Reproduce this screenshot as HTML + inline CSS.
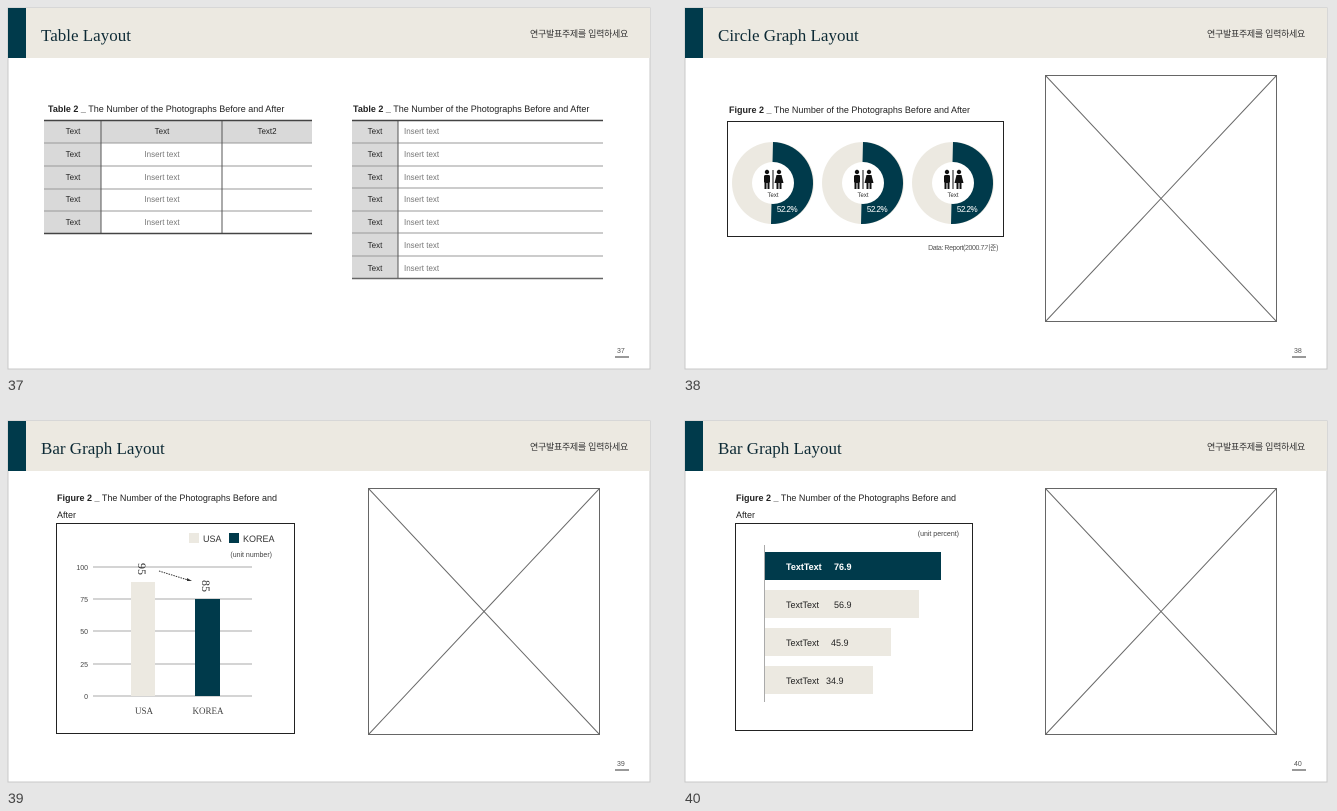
<!DOCTYPE html>
<html><head><meta charset="utf-8"><style>
html,body{margin:0;padding:0;background:#e6e6e6;}
svg{display:block;}
text{font-family:"Liberation Sans","Noto Sans CJK KR",sans-serif;}
.serif{font-family:"Liberation Serif","Noto Serif CJK SC",serif;}
</style></head><body>
<svg width="1337" height="811" viewBox="0 0 1337 811" xmlns="http://www.w3.org/2000/svg">
<defs>
<g id="hdr">
  <rect x="0" y="0" width="642" height="361" fill="#fff" stroke="#c8c8c8"/>
  <rect x="0" y="0" width="642" height="50" fill="#ece9e1"/>
  <rect x="0" y="0" width="18" height="50" fill="#003a4b"/>
  <text x="620" y="29" font-size="9" fill="#333" text-anchor="end" letter-spacing="-0.3" font-family="'Noto Sans CJK KR',sans-serif">연구발표주제를 입력하세요</text>
</g>
<g id="ppl">
  <circle cx="-6" cy="-9" r="2.2" fill="#111"/><rect x="-9" y="-6" width="6" height="8" rx="1.5" fill="#111"/><rect x="-8.5" y="1" width="2" height="7" fill="#111"/><rect x="-5.5" y="1" width="2" height="7" fill="#111"/>
  <rect x="-0.5" y="-11" width="1" height="19" fill="#111"/>
  <circle cx="6" cy="-9" r="2.2" fill="#111"/><path d="M3.5,-6 h5 l2,8 h-9 z" fill="#111"/><rect x="3.5" y="1" width="2" height="7" fill="#111"/><rect x="6.5" y="1" width="2" height="7" fill="#111"/>
</g>
<g id="donut">
  <circle cx="0" cy="0" r="41" fill="#ece9e1"/>
  <path d="M0,-41 A41 41 0 1 1 -2,41 Z" fill="#003a4b"/>
  <circle cx="0" cy="0" r="21" fill="#fff"/>
  <use href="#ppl" y="-2"/>
  <text x="0" y="14" font-size="6" text-anchor="middle" fill="#333">Text</text>
  <text x="14" y="29" font-size="8" text-anchor="middle" fill="#fff" letter-spacing="-0.5">52.2%</text>
</g>
<g id="xbox">
  <rect x="0" y="0" width="231" height="246" fill="none" stroke="#666" stroke-width="1"/>
  <line x1="0" y1="0" x2="231" y2="246" stroke="#666"/>
  <line x1="231" y1="0" x2="0" y2="246" stroke="#666"/>
</g>
</defs>

<!-- Slide 37 -->
<g transform="translate(8,8)">
  <use href="#hdr"/>
  <text x="33" y="33" class="serif" font-size="17" fill="#0d2a35">Table Layout</text>
  <text x="609" y="345" font-size="7" fill="#555">37</text>
  <line x1="607" y1="349" x2="621" y2="349" stroke="#333"/>
</g>
<text x="8" y="390" font-size="14" fill="#444">37</text>
<text x="48" y="112" font-size="9" fill="#222"><tspan font-weight="bold">Table 2 _</tspan> The Number of the Photographs Before and After</text>
<rect x="44" y="120" width="268" height="23" fill="#d9d9d9"/>
<rect x="44" y="143" width="57" height="91" fill="#d9d9d9"/>
<g stroke="#999" stroke-width="1">
  <line x1="44" y1="143" x2="312" y2="143"/><line x1="44" y1="166" x2="312" y2="166"/><line x1="44" y1="189" x2="312" y2="189"/><line x1="44" y1="211" x2="312" y2="211"/>
</g>
<line x1="101" y1="120" x2="101" y2="234" stroke="#555"/><line x1="222" y1="120" x2="222" y2="234" stroke="#555"/>
<line x1="44" y1="120.5" x2="312" y2="120.5" stroke="#444" stroke-width="1.5"/>
<line x1="44" y1="233.5" x2="312" y2="233.5" stroke="#444" stroke-width="1.5"/>
<g font-size="8" text-anchor="middle" fill="#222">
  <text x="73" y="134">Text</text><text x="162" y="134">Text</text><text x="267" y="134">Text2</text>
  <text x="73" y="157">Text</text><text x="73" y="180">Text</text><text x="73" y="202">Text</text><text x="73" y="225">Text</text>
</g>
<g font-size="8" text-anchor="middle" fill="#777">
  <text x="162" y="157">Insert text</text><text x="162" y="180">Insert text</text><text x="162" y="202">Insert text</text><text x="162" y="225">Insert text</text>
</g>
<text x="353" y="112" font-size="9" fill="#222"><tspan font-weight="bold">Table 2 _</tspan> The Number of the Photographs Before and After</text>
<rect x="352" y="120" width="46" height="159" fill="#d9d9d9"/>
<g stroke="#999">
  <line x1="352" y1="143" x2="603" y2="143"/><line x1="352" y1="166" x2="603" y2="166"/><line x1="352" y1="188" x2="603" y2="188"/><line x1="352" y1="211" x2="603" y2="211"/><line x1="352" y1="233" x2="603" y2="233"/><line x1="352" y1="256" x2="603" y2="256"/>
</g>
<line x1="398" y1="120" x2="398" y2="279" stroke="#555"/>
<line x1="352" y1="120.5" x2="603" y2="120.5" stroke="#444" stroke-width="1.5"/>
<line x1="352" y1="278.5" x2="603" y2="278.5" stroke="#666" stroke-width="1.5"/>
<g font-size="8" fill="#222" text-anchor="middle">
  <text x="375" y="134">Text</text><text x="375" y="157">Text</text><text x="375" y="180">Text</text><text x="375" y="202">Text</text><text x="375" y="225">Text</text><text x="375" y="248">Text</text><text x="375" y="271">Text</text>
</g>
<g font-size="8" fill="#777">
  <text x="404" y="134">Insert text</text><text x="404" y="157">Insert text</text><text x="404" y="180">Insert text</text><text x="404" y="202">Insert text</text><text x="404" y="225">Insert text</text><text x="404" y="248">Insert text</text><text x="404" y="271">Insert text</text>
</g>

<!-- Slide 38 -->
<g transform="translate(685,8)">
  <use href="#hdr"/>
  <text x="33" y="33" class="serif" font-size="17" fill="#0d2a35">Circle Graph Layout</text>
  <text x="609" y="345" font-size="7" fill="#555">38</text>
  <line x1="607" y1="349" x2="621" y2="349" stroke="#333"/>
</g>
<text x="685" y="390" font-size="14" fill="#444">38</text>
<text x="729" y="113" font-size="9" fill="#222"><tspan font-weight="bold">Figure 2 _</tspan> The Number of the Photographs Before and After</text>
<rect x="727.5" y="121.5" width="276" height="115" fill="none" stroke="#222"/>
<use href="#donut" x="773" y="183"/>
<use href="#donut" x="863" y="183"/>
<use href="#donut" x="953" y="183"/>
<text x="998" y="250" font-size="7" fill="#555" text-anchor="end" letter-spacing="-0.4">Data: Report(2000.7기준)</text>
<use href="#xbox" x="1045.5" y="75.5"/>

<!-- Slide 39 -->
<g transform="translate(8,421)">
  <use href="#hdr"/>
  <text x="33" y="33" class="serif" font-size="17" fill="#0d2a35">Bar Graph Layout</text>
  <text x="609" y="345" font-size="7" fill="#555">39</text>
  <line x1="607" y1="349" x2="621" y2="349" stroke="#333"/>
</g>
<text x="8" y="803" font-size="14" fill="#444">39</text>
<text x="57" y="501" font-size="9" fill="#222"><tspan font-weight="bold">Figure 2 _</tspan> The Number of the Photographs Before and</text>
<text x="57" y="518" font-size="9" fill="#222">After</text>
<rect x="56.5" y="523.5" width="238" height="210" fill="none" stroke="#222"/>
<rect x="189" y="533" width="10" height="10" fill="#ece9e1"/><text x="203" y="542" font-size="9" fill="#333">USA</text>
<rect x="229" y="533" width="10" height="10" fill="#003a4b"/><text x="243" y="542" font-size="9" fill="#333">KOREA</text>
<text x="272" y="557" font-size="7" fill="#444" text-anchor="end">(unit number)</text>
<g stroke="#aaa"><line x1="93" y1="567" x2="252" y2="567"/><line x1="93" y1="599" x2="252" y2="599"/><line x1="93" y1="631" x2="252" y2="631"/><line x1="93" y1="664" x2="252" y2="664"/><line x1="93" y1="696" x2="252" y2="696"/></g>
<g font-size="7" fill="#444" text-anchor="end"><text x="88" y="570">100</text><text x="88" y="602">75</text><text x="88" y="634">50</text><text x="88" y="667">25</text><text x="88" y="699">0</text></g>
<rect x="131" y="582" width="24" height="114" fill="#ece9e1"/>
<rect x="195" y="599" width="25" height="97" fill="#003a4b"/>
<text transform="translate(138,563) rotate(90)" font-size="12" fill="#333" class="serif">95</text>
<text transform="translate(202,580) rotate(90)" font-size="12" fill="#333" class="serif">85</text>
<line x1="159" y1="571" x2="188" y2="580" stroke="#333" stroke-dasharray="1.5,1"/>
<path d="M192,581 l-5,-3 l0,3 z" fill="#333"/>
<text x="144" y="714" font-size="9" fill="#444" class="serif" text-anchor="middle">USA</text>
<text x="208" y="714" font-size="9" fill="#444" class="serif" text-anchor="middle">KOREA</text>
<use href="#xbox" x="368.5" y="488.5"/>

<!-- Slide 40 -->
<g transform="translate(685,421)">
  <use href="#hdr"/>
  <text x="33" y="33" class="serif" font-size="17" fill="#0d2a35">Bar Graph Layout</text>
  <text x="609" y="345" font-size="7" fill="#555">40</text>
  <line x1="607" y1="349" x2="621" y2="349" stroke="#333"/>
</g>
<text x="685" y="803" font-size="14" fill="#444">40</text>
<text x="736" y="501" font-size="9" fill="#222"><tspan font-weight="bold">Figure 2 _</tspan> The Number of the Photographs Before and</text>
<text x="736" y="518" font-size="9" fill="#222">After</text>
<rect x="735.5" y="523.5" width="237" height="207" fill="none" stroke="#222"/>
<text x="959" y="536" font-size="7" fill="#444" text-anchor="end">(unit percent)</text>
<line x1="764.5" y1="545" x2="764.5" y2="702" stroke="#aaa"/>
<rect x="765" y="552" width="176" height="28" fill="#003a4b"/>
<rect x="765" y="590" width="154" height="28" fill="#ece9e1"/>
<rect x="765" y="628" width="126" height="28" fill="#ece9e1"/>
<rect x="765" y="666" width="108" height="28" fill="#ece9e1"/>
<g font-size="9"><text x="786" y="570" fill="#fff" font-weight="bold">TextText<tspan x="834">76.9</tspan></text>
<text x="786" y="608" fill="#222">TextText<tspan x="834">56.9</tspan></text>
<text x="786" y="646" fill="#222">TextText<tspan x="831">45.9</tspan></text>
<text x="786" y="684" fill="#222">TextText<tspan x="826">34.9</tspan></text></g>
<use href="#xbox" x="1045.5" y="488.5"/>
</svg>
</body></html>
